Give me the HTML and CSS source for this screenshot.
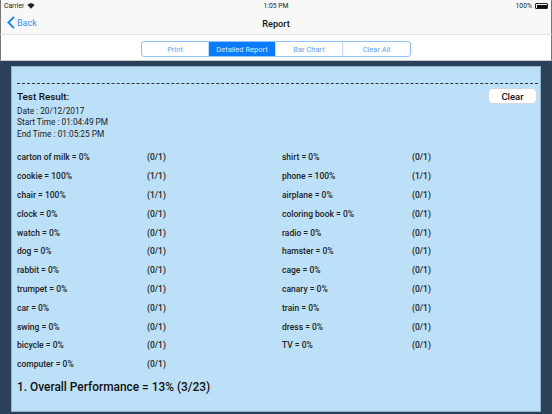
FILE: index.html
```html
<!DOCTYPE html>
<html lang="en">
<head>
<meta charset="utf-8">
<title>Report</title>
<link rel="stylesheet" href="styles.css">
</head>
<body>
<div class="topbar">
  <div class="status">
    <div class="status-left">Carrier
      <svg class="wifi" width="8" height="6" viewBox="0 0 10 8"><path d="M5 7.6 L0.2 2.6 C3 -0.4 7 -0.4 9.8 2.6 Z" fill="#222"/></svg>
    </div>
    <div class="status-time">1:05 PM</div>
    <div class="status-right">100%
      <span class="battery"><span class="battery-fill"></span></span>
    </div>
  </div>
  <div class="nav">
    <div class="back">
      <svg width="8" height="13" viewBox="0 0 8 13"><path d="M7 0.8 L1.4 6.5 L7 12.2" fill="none" stroke="#1a82fb" stroke-width="1.9"/></svg>
      <span>Back</span>
    </div>
    <div class="title">Report</div>
  </div>
</div>
<div class="segbar">
  <div class="seg">
    <div class="seg-item s1">Print</div>
    <div class="seg-item s2 active">Detailed Report</div>
    <div class="seg-item s3">Bar Chart</div>
    <div class="seg-item s4">Clear All</div>
  </div>
</div>
<main class="stage">
  <div class="panel">
    <div class="dash"></div>
    <div class="head">
      <div class="meta">
        <div class="h">Test Result:</div>
        <div>Date : 20/12/2017</div>
        <div>Start Time : 01:04:49 PM</div>
        <div>End Time : 01:05:25 PM</div>
      </div>
      <div class="clear">Clear</div>
    </div>
    <div class="grid">
      <div>carton of milk = 0%</div><div>(0/1)</div><div>shirt = 0%</div><div>(0/1)</div>
      <div>cookie = 100%</div><div>(1/1)</div><div>phone = 100%</div><div>(1/1)</div>
      <div>chair = 100%</div><div>(1/1)</div><div>airplane = 0%</div><div>(0/1)</div>
      <div>clock = 0%</div><div>(0/1)</div><div>coloring book = 0%</div><div>(0/1)</div>
      <div>watch = 0%</div><div>(0/1)</div><div>radio = 0%</div><div>(0/1)</div>
      <div>dog = 0%</div><div>(0/1)</div><div>hamster = 0%</div><div>(0/1)</div>
      <div>rabbit = 0%</div><div>(0/1)</div><div>cage = 0%</div><div>(0/1)</div>
      <div>trumpet = 0%</div><div>(0/1)</div><div>canary = 0%</div><div>(0/1)</div>
      <div>car = 0%</div><div>(0/1)</div><div>train = 0%</div><div>(0/1)</div>
      <div>swing = 0%</div><div>(0/1)</div><div>dress = 0%</div><div>(0/1)</div>
      <div>bicycle = 0%</div><div>(0/1)</div><div>TV = 0%</div><div>(0/1)</div>
      <div>computer = 0%</div><div>(0/1)</div>
    </div>
    <div class="overall">1. Overall Performance = 13% (3/23)</div>
  </div>
</main>
</body>
</html>
```
FILE: styles.css
```css
* { box-sizing: border-box; }
html, body { margin: 0; height: 414px; overflow: hidden; }
body { width: 552px; font-family: Roboto, "Liberation Sans", sans-serif; background: #2a4158; color: #111; display: flex; flex-direction: column; }
.topbar { height: 35px; background: #f8f8f8; border-bottom: 1px solid #e4e4e4; border-left: 1px solid #777; border-right: 1px solid #777; flex: none; }
.status { height: 12px; display: flex; justify-content: space-between; align-items: center; font-size: 6.8px; padding: 0 3px 0 3px; position: relative; color: #222; }
.status-left, .status-right { display: flex; align-items: center; gap: 3px; }
.status-time { position: absolute; left: 0; right: 0; text-align: center; }
.battery { width: 13px; height: 6px; border: 0.5px solid #222; padding: 0.5px; display: block; border-radius: 1px; }
.battery-fill { display: block; height: 100%; background: #111; }
.nav { height: 22px; position: relative; display: flex; align-items: center; justify-content: center; }
.back { position: absolute; left: 6px; top: 4px; display: flex; align-items: center; gap: 2px; color: #3a8ffb; font-size: 9px; }
.title { font-size: 9.2px; font-weight: 500; color: #111; }
.segbar { height: 26px; background: #fff; border-bottom: 1px solid #c8ccd0; border-left: 1px solid #777; border-right: 1px solid #777; flex: none; display: flex; align-items: flex-start; justify-content: center; padding-top: 6px; }
.seg { display: flex; height: 16px; width: 270px; border: 1.3px solid #8fc3fc; border-radius: 3px; overflow: hidden; font-size: 7.5px; color: #5aa4fb; }
.seg-item { display: flex; align-items: center; justify-content: center; border-right: 1.3px solid #bcdcfd; }
.seg-item:last-child { border-right: 0; }
.s1 { width: 67px; }
.s2 { width: 67px; }
.s3 { width: 67px; }
.s4 { flex: 1; }
.active { background: #0a7bfa; color: #dbecff; }
.stage { flex: 1; padding: 5px 11px 2px 11px; min-height: 0; }
.panel { height: 100%; background: #bde0f9; border: 1px solid #8fb0cc; padding: 16px 2px 0 5px; font-size: 8.3px; color: #1a1a1a; }
.dash { border-top: 1px dashed #333; }
.head { display: flex; justify-content: space-between; align-items: flex-start; margin-top: 4px; }
.meta { line-height: 11.3px; }
.h { font-size: 9.9px; font-weight: 500; line-height: 18px; color: #111; }
.clear { width: 49px; height: 16px; background: #fff; border: 1px solid #d2d8de; border-radius: 5px; margin-right: 1px; display: flex; align-items: center; justify-content: center; font-size: 9.5px; font-weight: 500; color: #111; }
.grid { display: grid; grid-template-columns: 130px 135px 130px 1fr; grid-auto-rows: 18.82px; align-items: center; margin-top: 8px; font-size: 8.5px; font-weight: 500; color: #222; }
.overall { font-size: 11.9px; font-weight: 500; margin-top: 6px; color: #111; }
```
